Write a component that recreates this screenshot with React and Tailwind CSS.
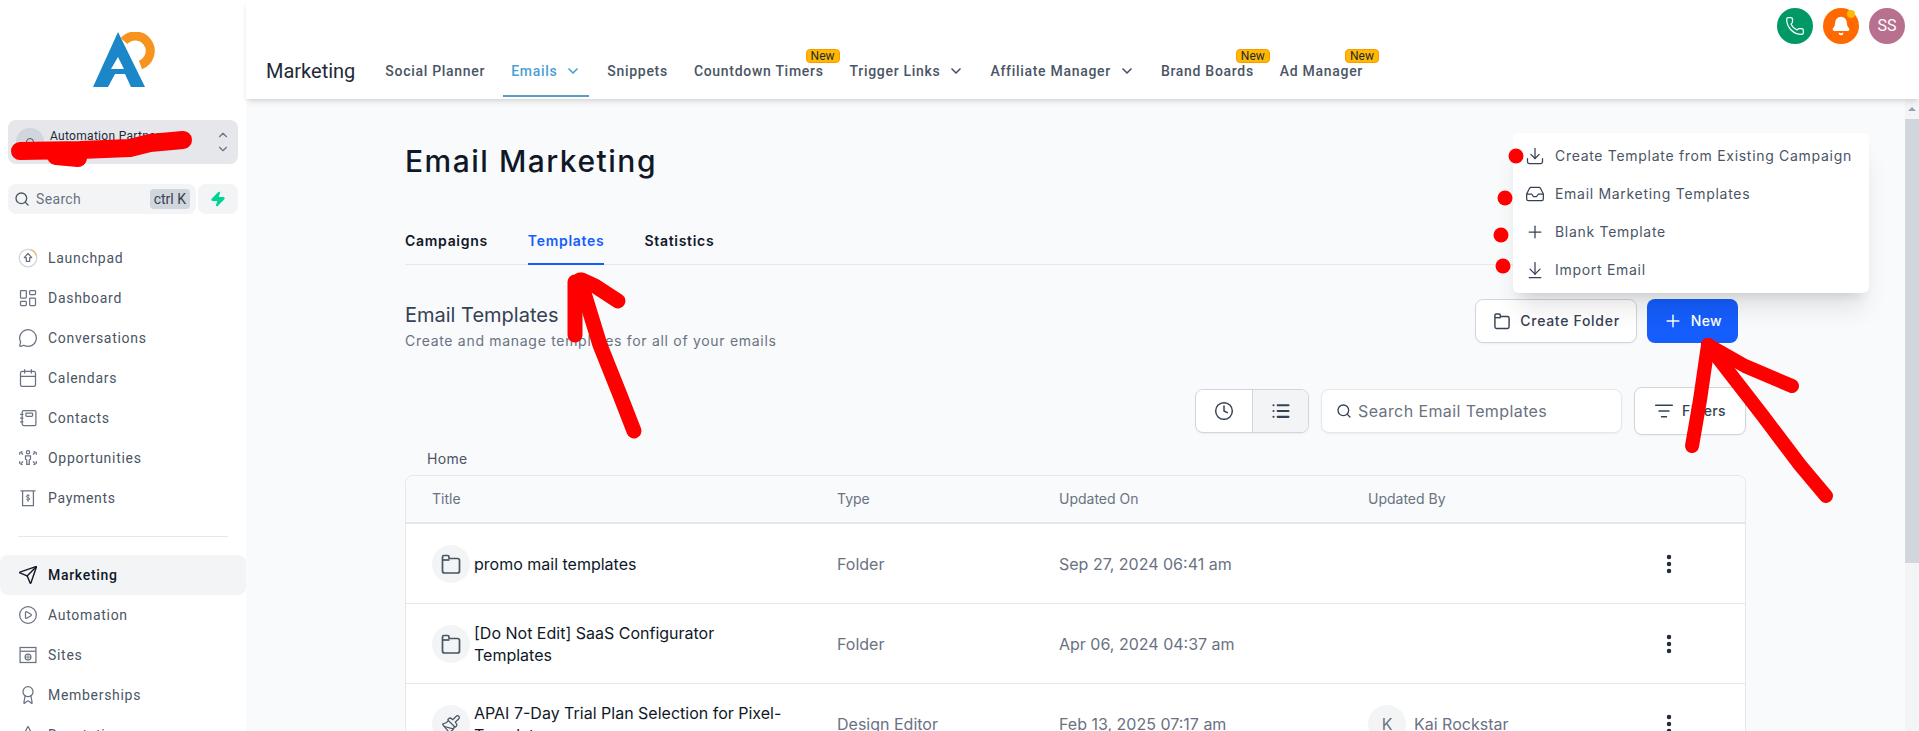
import {
  ArrowDownToLine,
  Award,
  Bell,
  Calendar,
  ChevronDown,
  ChevronUp,
  CirclePlay,
  Clock,
  Download,
  EllipsisVertical,
  Inbox,
  LayoutDashboard,
  List,
  ListFilter,
  MessageCircle,
  Paintbrush,
  Phone,
  Plus,
  Search,
  Send,
  Star,
  Zap,
} from "lucide-react";

function LaunchpadIcon() {
  return (
    <svg viewBox="0 0 24 24" className="h-5 w-5" fill="none" strokeWidth="1.5">
      <circle cx="12" cy="12" r="10.500" stroke="#d1d5db" />
      <path d="M15 2a10.500 10.500 0 0 1 7 7" stroke="#f6b26b" />
      <path d="M12 6.500 7.500 11.500H10V16h4v-4.500h2.500z" stroke="#6b7280" strokeLinejoin="round" />
    </svg>
  );
}

function ContactsIcon() {
  return (
    <svg viewBox="0 0 24 24" className="h-5 w-5" fill="none" stroke="#6b7280" strokeWidth="1.5">
      <path d="M5 5a2 2 0 0 1 2-2h13a1.500 1.500 0 0 1 1.500 1.500v15A1.500 1.500 0 0 1 20 21H7a2 2 0 0 1-2-2z" />
      <rect x="9.500" y="6" width="8" height="4" rx="1" />
      <path d="M2.500 7.500h4M2.500 12h4M2.500 16.500h4" />
    </svg>
  );
}

function OpportunitiesIcon() {
  return (
    <svg viewBox="0 0 24 24" className="h-5 w-5" fill="none" stroke="#6b7280" strokeWidth="1.5">
      <circle cx="12" cy="5" r="2" />
      <path d="M9 9.500h6v4l-1.500 1v5h-3v-5l-1.500-1z" />
      <path d="M2 8V4.500h3.500M22 8V4.500h-3.500M2 16v3.500h3.500M22 16v3.500h-3.500" strokeDasharray="3 1.500" />
      <path d="M3 5l3 3M21 5l-3 3M3 19l3-3M21 19l-3-3" />
    </svg>
  );
}

function PaymentsIcon() {
  return (
    <svg viewBox="0 0 24 24" className="h-5 w-5" fill="none" stroke="#6b7280" strokeWidth="1.5">
      <path d="M3 3.500h18M5.500 3.500V21h13V3.500" />
      <path d="M14 9.500c-.5-1-3.500-1.500-4 .3-.5 2.200 4 1.200 4 3.400 0 1.800-3.500 1.500-4 .3M12 7.500v9" strokeWidth="1.200" />
    </svg>
  );
}

function SitesIcon() {
  return (
    <svg viewBox="0 0 24 24" className="h-5 w-5" fill="none" stroke="#6b7280" strokeWidth="1.5">
      <rect x="2.500" y="3" width="19" height="18" />
      <path d="M2.500 7.500h19" />
      <circle cx="12" cy="14.500" r="3.500" />
      <path d="M8.500 14.500h7M12 11v7" strokeWidth="1" />
    </svg>
  );
}

function FolderIcon({ className }) {
  return (
    <svg viewBox="0 0 24 24" className={className} fill="none" stroke="currentColor" strokeWidth="1.7" strokeLinejoin="round">
      <path d="M3.500 8V5a1.500 1.500 0 0 1 1.500-1.500h3.500A1.500 1.500 0 0 1 10 5v1.500h8.500a2 2 0 0 1 2 2V19a2 2 0 0 1-2 2h-13a2 2 0 0 1-2-2z" />
      <path d="M3.500 8h7" />
    </svg>
  );
}

const topNav = [
  { icon: <LaunchpadIcon />, label: "Launchpad" },
  { icon: <LayoutDashboard className="h-5 w-5 text-gray-500" strokeWidth={1.5} />, label: "Dashboard" },
  { icon: <MessageCircle className="h-5 w-5 text-gray-500" strokeWidth={1.5} />, label: "Conversations" },
  { icon: <Calendar className="h-5 w-5 text-gray-500" strokeWidth={1.5} />, label: "Calendars" },
  { icon: <ContactsIcon />, label: "Contacts" },
  { icon: <OpportunitiesIcon />, label: "Opportunities" },
  { icon: <PaymentsIcon />, label: "Payments" },
];

const bottomNav = [
  { icon: <Send className="h-5 w-5 text-gray-900" strokeWidth={1.7} />, label: "Marketing", active: true },
  { icon: <CirclePlay className="h-5 w-5 text-gray-500" strokeWidth={1.5} />, label: "Automation" },
  { icon: <SitesIcon />, label: "Sites" },
  { icon: <Award className="h-5 w-5 text-gray-500" strokeWidth={1.5} />, label: "Memberships" },
  { icon: <Star className="h-5 w-5 text-gray-500" strokeWidth={1.5} />, label: "Reputation" },
];

const headerLinks = [
  { label: "Social Planner" },
  { label: "Emails", chevron: true, active: true },
  { label: "Snippets" },
  { label: "Countdown Timers", isNew: true },
  { label: "Trigger Links", chevron: true },
  { label: "Affiliate Manager", chevron: true },
  { label: "Brand Boards", isNew: true },
  { label: "Ad Manager", isNew: true },
];

const menuItems = [
  { icon: <Download className="h-5 w-5" strokeWidth={1.5} />, label: "Create Template from Existing Campaign" },
  { icon: <Inbox className="h-5 w-5" strokeWidth={1.5} />, label: "Email Marketing Templates" },
  { icon: <Plus className="h-5 w-5" strokeWidth={1.5} />, label: "Blank Template" },
  { icon: <ArrowDownToLine className="h-5 w-5" strokeWidth={1.5} />, label: "Import Email" },
];

const rows = [
  { title: "promo mail templates", type: "Folder", date: "Sep 27, 2024 06:41 am" },
  { title: "[Do Not Edit] SaaS Configurator Templates", type: "Folder", date: "Apr 06, 2024 04:37 am" },
  {
    title: "APAI 7-Day Trial Plan Selection for Pixel-Templates",
    type: "Design Editor",
    date: "Feb 13, 2025 07:17 am",
    by: "Kai Rockstar",
    brush: true,
  },
];

function NavItem({ item }) {
  return (
    <div
      className={`flex h-10 shrink-0 items-center gap-2.5 rounded-lg pl-4.5 text-sm tracking-wider ${
        item.active ? "bg-gray-100 font-medium text-gray-900" : "text-gray-600"
      }`}
    >
      {item.icon}
      {item.label}
    </div>
  );
}

function Sidebar() {
  return (
    <aside className="flex w-[246px] shrink-0 flex-col bg-white font-['Roboto',sans-serif]">
      <div className="flex shrink-0 justify-center pt-8 pl-1">
        <svg viewBox="0 0 64 56" className="h-14 w-16">
          <path d="M25 0 0 55h15l7-13h10l6 13h14L25 0zm0 25-7 12h13z" fill="#1b87c9" fillRule="evenodd" />
          <path d="M31 9A15 15 0 1 1 47.500 33" fill="none" stroke="#f7941e" strokeWidth="9" />
        </svg>
      </div>

      <div className="mx-2 mt-8 flex h-11 shrink-0 items-center gap-1.5 rounded-lg bg-gray-200 px-2 text-xs tracking-wide text-gray-800">
        <div className="flex h-7 w-7 items-center justify-center rounded-full bg-gray-300 text-gray-600">
          <span className="h-2 w-2 rounded-full border border-gray-600" />
        </div>
        <span className="flex-1 pb-3">Automation Partners</span>
        <div className="flex flex-col text-gray-500">
          <ChevronUp className="h-3.5 w-3.5" />
          <ChevronDown className="h-3.5 w-3.5" />
        </div>
      </div>

      <div className="mx-2 mt-5 flex h-7.5 shrink-0 gap-0.5">
        <div className="flex flex-1 items-center gap-1.5 rounded-lg bg-gray-100 pr-1.5 pl-1.5 text-sm tracking-wide text-gray-500">
          <Search className="h-4 w-4 text-gray-600" />
          <span className="flex-1">Search</span>
          <span className="rounded bg-gray-300 px-1 text-sm tracking-normal text-gray-700">ctrl K</span>
        </div>
        <div className="flex w-10 items-center justify-center rounded-lg bg-gray-100">
          <Zap className="h-4 w-4 fill-emerald-400 text-emerald-400" />
        </div>
      </div>

      <nav className="mt-6 flex shrink-0 flex-col">
        {topNav.map((item) => (
          <NavItem key={item.label} item={item} />
        ))}
      </nav>
      <div className="mx-4.5 mt-4.5 shrink-0 border-t border-gray-200" />
      <nav className="mt-4.5 flex shrink-0 flex-col">
        {bottomNav.map((item) => (
          <NavItem key={item.label} item={item} />
        ))}
      </nav>
    </aside>
  );
}

function Header() {
  return (
    <header className="relative z-10 flex h-[99px] shrink-0 items-end bg-white pl-5 font-['Roboto',sans-serif] shadow-md">
      <h1 className="pr-5.5 pb-3.5 text-xl text-gray-800">Marketing</h1>
      <nav className="mb-0.5 flex items-end gap-2.5">
        {headerLinks.map((link) => (
          <div
            key={link.label}
            className={`relative flex items-center gap-2 border-b-2 px-2 pt-3 pb-3.5 text-sm font-medium tracking-wider ${
              link.active ? "border-[#5b9ec4] text-[#4a9fd4]" : "border-transparent text-gray-600"
            }`}
          >
            {link.label}
            {link.chevron && <ChevronDown className="h-4 w-4" strokeWidth={2.5} />}
            {link.isNew && (
              <span className="absolute top-0 -right-2 rounded-sm border border-amber-500 bg-amber-400 px-1 text-xs leading-3 font-normal tracking-normal text-gray-800">
                New
              </span>
            )}
          </div>
        ))}
      </nav>
      <div className="absolute top-2 right-3.5 flex gap-2.5">
        <div className="flex h-9 w-9 items-center justify-center rounded-full bg-emerald-600 text-white">
          <Phone className="h-5 w-5" strokeWidth={1.5} />
        </div>
        <div className="relative flex h-9 w-9 items-center justify-center rounded-full bg-orange-500 text-white">
          <Bell className="h-5 w-5 fill-white" />
          <span className="absolute top-0.5 right-1 h-2 w-2 rounded-full bg-amber-400" />
        </div>
        <div className="flex h-9 w-9 items-center justify-center rounded-full bg-[#b8708f] text-base text-white">
          SS
        </div>
      </div>
    </header>
  );
}

function NewMenu() {
  return (
    <div className="absolute top-8.5 right-9 z-20 w-[356px] rounded-md bg-white py-1 font-['Inter',sans-serif] shadow-xl">
      {menuItems.map((item) => (
        <div key={item.label} className="flex h-9.5 items-center gap-2.5 pl-3 text-sm tracking-wider text-gray-600">
          <span className="text-gray-700">{item.icon}</span>
          {item.label}
        </div>
      ))}
    </div>
  );
}

function TemplateRow({ row }) {
  return (
    <div className="grid h-20 grid-cols-[405px_222px_309px_1fr_auto] items-center border-b border-gray-200 pr-16 pl-6.5 text-base text-gray-500">
      <div className="flex items-center gap-1 text-gray-900">
        <div className="flex h-9.5 w-9.5 shrink-0 items-center justify-center rounded-full bg-gray-100 text-gray-600">
          {row.brush ? <Paintbrush className="h-5 w-5" strokeWidth={1.5} /> : <FolderIcon className="h-6 w-6" />}
        </div>
        <span className="max-w-xs leading-snug">{row.title}</span>
      </div>
      <span>{row.type}</span>
      <span>{row.date}</span>
      <div className="flex items-center gap-2">
        {row.by && (
          <>
            <span className="flex h-9.5 w-9.5 items-center justify-center rounded-full bg-gray-100">K</span>
            {row.by}
          </>
        )}
      </div>
      <EllipsisVertical className="h-6 w-6 text-gray-800" strokeWidth={2.5} />
    </div>
  );
}

function Main() {
  return (
    <main className="relative flex-1 overflow-hidden bg-gray-50 font-['Inter',sans-serif]">
      <NewMenu />
      <div className="mx-auto w-[1341px] pt-11">
        <h2 className="text-3xl font-medium tracking-wider text-gray-900">Email Marketing</h2>

        <div className="mt-12 flex gap-10 border-b border-gray-200 text-sm font-semibold tracking-wider">
          <span className="-mb-px pt-1 pb-3.5 text-gray-900">Campaigns</span>
          <span className="-mb-px border-b-2 border-blue-600 pt-1 pb-3 text-blue-600">Templates</span>
          <span className="-mb-px pt-1 pb-3.5 text-gray-900">Statistics</span>
        </div>

        <div className="mt-9 flex items-start justify-between">
          <div>
            <h3 className="text-xl leading-7 text-gray-700">Email Templates</h3>
            <p className="mt-0.5 text-sm tracking-wider text-gray-500">Create and manage templates for all of your emails</p>
          </div>
          <div className="-mt-0.5 flex gap-2.5 pr-2">
            <button
              type="button"
              className="flex h-11 items-center gap-2 rounded-lg border border-gray-300 bg-white px-4 text-sm font-medium tracking-wider text-gray-700 shadow-xs"
            >
              <FolderIcon className="h-5 w-5" />
              Create Folder
            </button>
            <button
              type="button"
              className="flex h-11 items-center gap-2 rounded-lg bg-blue-600 px-4 text-sm font-medium tracking-wide text-white"
            >
              <Plus className="h-5 w-5" strokeWidth={1.75} />
              New
            </button>
          </div>
        </div>

        <div className="mt-9 flex h-12 items-center justify-end gap-3">
          <div className="flex h-11 overflow-hidden rounded-lg border border-gray-300 bg-white text-gray-700 shadow-xs">
            <div className="flex w-14 items-center justify-center">
              <Clock className="h-5 w-5" strokeWidth={1.75} />
            </div>
            <div className="flex w-14 items-center justify-center border-l border-gray-300 bg-gray-100">
              <List className="h-5 w-5" strokeWidth={2.5} />
            </div>
          </div>
          <div className="flex h-11 w-[301px] items-center gap-1.5 rounded-lg border border-gray-200 bg-white px-3.5 text-base tracking-wide text-gray-500 shadow-xs">
            <Search className="h-4 w-4 text-gray-700" />
            Search Email Templates
          </div>
          <button
            type="button"
            className="flex h-12 w-28 items-center justify-center gap-2 rounded-lg border border-gray-300 bg-white text-sm font-medium tracking-wide text-gray-700 shadow-xs"
          >
            <ListFilter className="h-5 w-5" strokeWidth={1.75} />
            Filters
          </button>
        </div>

        <div className="mt-3.5 pl-5.5 text-sm tracking-wide text-gray-600">Home</div>

        <div className="mt-1.5 rounded-t-lg border border-gray-200 bg-white">
          <div className="grid h-12 grid-cols-[405px_222px_309px_1fr] items-center rounded-t-lg border-b-2 border-gray-200 bg-gray-50 pl-6.5 text-sm text-gray-500">
            <span>Title</span>
            <span>Type</span>
            <span>Updated On</span>
            <span>Updated By</span>
          </div>
          {rows.map((row) => (
            <TemplateRow key={row.title} row={row} />
          ))}
        </div>
      </div>
    </main>
  );
}

function Scribbles() {
  return (
    <svg
      viewBox="0 0 1919 731"
      className="pointer-events-none absolute inset-0 z-30 h-full w-full"
      fill="none"
      stroke="#fe0000"
      strokeLinecap="round"
      strokeLinejoin="round"
    >
      <g strokeWidth="18">
        <path d="M20 151 80 150 130 148 150 143 183 140" />
        <path d="M56 156 78 158" />
      </g>
      <g strokeWidth="15">
        <path d="M575 282V335" />
        <path d="M582 280 595 286 618 301" />
        <path d="M580 280 600 345 620 395 634 431" />
      </g>
      <g strokeWidth="14">
        <path d="M1708 345 1745 366 1792 386" />
        <path d="M1708 345 1700 400 1692 446" />
        <path d="M1708 345 1763 416 1800 465 1826 496" />
      </g>
      <g fill="#fe0000" stroke="none">
        <circle cx="1516" cy="156" r="7.500" />
        <circle cx="1505" cy="198" r="7.500" />
        <circle cx="1501" cy="235" r="7.500" />
        <circle cx="1503" cy="266" r="7.500" />
      </g>
    </svg>
  );
}

export default function App() {
  return (
    <div className="relative flex h-screen w-full overflow-hidden bg-white">
      <Sidebar />
      <div className="flex min-w-0 flex-1 flex-col">
        <Header />
        <div className="flex min-h-0 flex-1">
          <Main />
          <div className="flex w-3.5 flex-col items-center bg-gray-100 pt-2">
            <div className="h-0 w-0 border-x-4 border-b-4 border-x-transparent border-b-gray-400" />
            <div className="mt-2 h-[444px] w-full bg-gray-300" />
          </div>
        </div>
      </div>
      <Scribbles />
    </div>
  );
}
